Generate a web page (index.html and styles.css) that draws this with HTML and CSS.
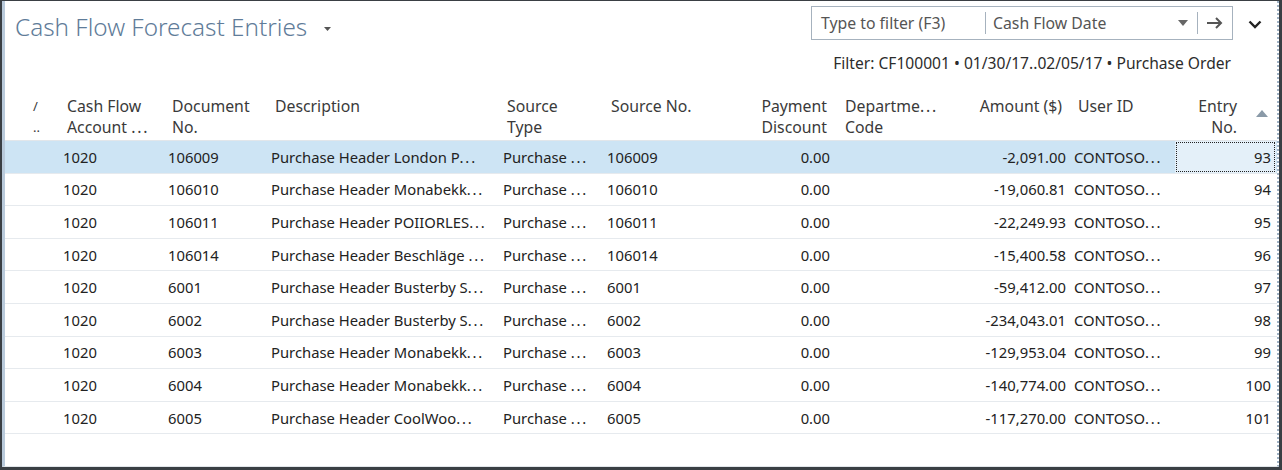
FILE: index.html
```html
<!DOCTYPE html>
<html>
<head>
<meta charset="utf-8">
<link rel="stylesheet" href="styles.css">
</head>
<body>
<div class="frame">
  <div class="inner">
    <div class="top">
      <div class="title">Cash Flow Forecast Entries <span class="caret"><svg width="7" height="4" viewBox="0 0 7 4"><path d="M0 0h7L3.5 4z" fill="#555"/></svg></span></div>
      <div class="tools">
        <div class="filterbar">
          <span class="fb-input">Type to filter (F3)</span>
          <span class="fb-sep"></span>
          <span class="fb-field">Cash Flow Date</span>
          <span class="fb-drop"><svg width="10" height="6" viewBox="0 0 10 6"><path d="M0 0h10L5 6z" fill="#666"/></svg></span>
          <span class="fb-sep2"></span>
          <span class="fb-go"><svg width="18" height="14" viewBox="0 0 18 14"><path d="M1 7h14M10 2l5 5-5 5" fill="none" stroke="#555" stroke-width="2"/></svg></span>
        </div>
        <div class="chev"><svg width="14" height="9" viewBox="0 0 14 9"><path d="M1.5 1.5l5.5 5.5 5.5-5.5" fill="none" stroke="#222" stroke-width="2.4"/></svg></div>
      </div>
    </div>
    <div class="filterline">Filter: CF100001 • 01/30/17..02/05/17 • Purchase Order</div>

    <div class="grid">
      <div class="row head">
        <div class="c c0">/<br>..</div>
        <div class="c">Cash Flow<br>Account <span class="el">...</span></div>
        <div class="c">Document<br>No.</div>
        <div class="c">Description</div>
        <div class="c">Source<br>Type</div>
        <div class="c">Source No.</div>
        <div class="c r">Payment<br>Discount</div>
        <div class="c dept">Departme<span class="el">...</span><br>Code</div>
        <div class="c r amt">Amount ($)</div>
        <div class="c uid">User ID</div>
        <div class="c r entry">Entry<br>No.<span class="sort"><svg width="12" height="7" viewBox="0 0 12 7"><path d="M0 7L6 0l6 7z" fill="#8a9aa8"/></svg></span></div>
      </div>

      <div class="row sel">
        <div class="c"></div><div class="c">1020</div><div class="c">106009</div><div class="c">Purchase Header London P<span class="el">...</span></div><div class="c">Purchase <span class="el">...</span></div><div class="c">106009</div><div class="c r">0.00</div><div class="c"></div><div class="c r amt">-2,091.00</div><div class="c uid">CONTOSO<span class="el">...</span></div><div class="c r entry focus">93</div>
      </div>
      <div class="row">
        <div class="c"></div><div class="c">1020</div><div class="c">106010</div><div class="c">Purchase Header Monabekk<span class="el">...</span></div><div class="c">Purchase <span class="el">...</span></div><div class="c">106010</div><div class="c r">0.00</div><div class="c"></div><div class="c r amt">-19,060.81</div><div class="c uid">CONTOSO<span class="el">...</span></div><div class="c r entry">94</div>
      </div>
      <div class="row">
        <div class="c"></div><div class="c">1020</div><div class="c">106011</div><div class="c">Purchase Header POIIORLES<span class="el">...</span></div><div class="c">Purchase <span class="el">...</span></div><div class="c">106011</div><div class="c r">0.00</div><div class="c"></div><div class="c r amt">-22,249.93</div><div class="c uid">CONTOSO<span class="el">...</span></div><div class="c r entry">95</div>
      </div>
      <div class="row">
        <div class="c"></div><div class="c">1020</div><div class="c">106014</div><div class="c">Purchase Header Beschläge <span class="el">...</span></div><div class="c">Purchase <span class="el">...</span></div><div class="c">106014</div><div class="c r">0.00</div><div class="c"></div><div class="c r amt">-15,400.58</div><div class="c uid">CONTOSO<span class="el">...</span></div><div class="c r entry">96</div>
      </div>
      <div class="row">
        <div class="c"></div><div class="c">1020</div><div class="c">6001</div><div class="c">Purchase Header Busterby S<span class="el">...</span></div><div class="c">Purchase <span class="el">...</span></div><div class="c">6001</div><div class="c r">0.00</div><div class="c"></div><div class="c r amt">-59,412.00</div><div class="c uid">CONTOSO<span class="el">...</span></div><div class="c r entry">97</div>
      </div>
      <div class="row">
        <div class="c"></div><div class="c">1020</div><div class="c">6002</div><div class="c">Purchase Header Busterby S<span class="el">...</span></div><div class="c">Purchase <span class="el">...</span></div><div class="c">6002</div><div class="c r">0.00</div><div class="c"></div><div class="c r amt">-234,043.01</div><div class="c uid">CONTOSO<span class="el">...</span></div><div class="c r entry">98</div>
      </div>
      <div class="row">
        <div class="c"></div><div class="c">1020</div><div class="c">6003</div><div class="c">Purchase Header Monabekk<span class="el">...</span></div><div class="c">Purchase <span class="el">...</span></div><div class="c">6003</div><div class="c r">0.00</div><div class="c"></div><div class="c r amt">-129,953.04</div><div class="c uid">CONTOSO<span class="el">...</span></div><div class="c r entry">99</div>
      </div>
      <div class="row">
        <div class="c"></div><div class="c">1020</div><div class="c">6004</div><div class="c">Purchase Header Monabekk<span class="el">...</span></div><div class="c">Purchase <span class="el">...</span></div><div class="c">6004</div><div class="c r">0.00</div><div class="c"></div><div class="c r amt">-140,774.00</div><div class="c uid">CONTOSO<span class="el">...</span></div><div class="c r entry">100</div>
      </div>
      <div class="row">
        <div class="c"></div><div class="c">1020</div><div class="c">6005</div><div class="c">Purchase Header CoolWoo<span class="el">...</span></div><div class="c">Purchase <span class="el">...</span></div><div class="c">6005</div><div class="c r">0.00</div><div class="c"></div><div class="c r amt">-117,270.00</div><div class="c uid">CONTOSO<span class="el">...</span></div><div class="c r entry">101</div>
      </div>
    </div>
  </div>
</div>
</body>
</html>
```

FILE: styles.css
```css
html, body {
  margin: 0;
  padding: 0;
  background: #2f3438;
}
body {
  width: 1282px;
  height: 470px;
  font-family: "Noto Sans", "Open Sans", sans-serif;
  color: #222;
}
.frame {
  box-sizing: border-box;
  width: 1282px;
  height: 470px;
  border-top: 1px solid #3a3f44;
  border-left: 2px solid #3a3f44;
  border-right: 3px solid #3a3f44;
  border-bottom: 3px solid #3a3f44;
  background: #fff;
}
.inner {
  box-sizing: border-box;
  height: 100%;
  border-left: 3px solid #b9cadb;
  border-right: 2px dotted #9fb2c4;
  border-bottom: 1px solid #e2e6ea;
  background: #fff;
}
.top {
  display: flex;
  justify-content: space-between;
  align-items: flex-start;
  height: 46px;
}
.title {
  margin-left: 10px;
  margin-top: 10px;
  font-size: 24.3px;
  font-weight: 300;
  line-height: 32px;
  color: #5f7c99;
}
.caret {
  display: inline-block;
  margin-left: 10px;
  vertical-align: 5px;
}
.caret svg { display: block; }
.tools {
  display: flex;
  align-items: center;
  margin-top: 5px;
}
.filterbar {
  box-sizing: border-box;
  width: 422px;
  height: 34px;
  border: 1px solid #a6b2be;
  display: flex;
  align-items: center;
  font-size: 15.8px;
  color: #555;
}
.fb-input {
  width: 173px;
  padding-left: 9px;
  box-sizing: border-box;
}
.fb-sep {
  width: 1px;
  height: 22px;
  background: #a6b2be;
}
.fb-field {
  flex: 1;
  padding-left: 7px;
}
.fb-drop {
  display: flex;
  margin-right: 9px;
}
.fb-sep2 {
  width: 1px;
  height: 22px;
  background: #a6b2be;
}
.fb-go {
  display: flex;
  width: 34px;
  justify-content: center;
}
.chev {
  width: 44px;
  display: flex;
  justify-content: center;
  padding-top: 2px;
}
.filterline {
  text-align: right;
  padding-right: 46px;
  font-size: 15.6px;
  line-height: 20px;
  color: #2c2c2c;
  margin-top: 6px;
}
.grid {
  margin-top: 23px;
}
.row {
  display: grid;
  grid-template-columns: 52px 105px 103px 232px 104px 134px 103px 130px 102px 105px 101px;
  height: 31.6px;
  border-bottom: 1px solid #e6eaee;
  font-size: 14.8px;
  align-items: center;
}
.row.head {
  height: 44px;
  align-items: start;
  font-size: 15.8px;
  line-height: 21px;
  color: #3a3a3a;
  border-bottom: 1px solid #e2e6ea;
}
.el { letter-spacing: 1.8px; }
.c {
  padding: 0 6px;
  white-space: nowrap;
  overflow: hidden;
  position: relative;
}
.head .c { padding-left: 10px; }
.head .c0 { padding-left: 28px; font-size: 13px; }
.head .c.dept { padding-left: 7px; }
.c.r { text-align: right; padding-right: 8px; }
.head .c.r { padding-right: 11px; }
.c.amt { padding-right: 4px; }
.head .c.amt { padding-right: 8px; }
.c.uid { padding-left: 4px; }
.head .c.uid { padding-left: 8px; }
.c.entry { padding-right: 5px; }
.head .c.entry { padding-right: 39px; }
.sort {
  position: absolute;
  right: 8px;
  top: 14px;
}
.sort svg { display: block; }
.row.sel { background: #cde4f4; }
.row.sel .focus {
  background: #e4f0f9;
  outline: 1px dotted #222;
  outline-offset: -2px;
  height: 100%;
  display: flex;
  align-items: center;
  justify-content: flex-end;
  box-sizing: border-box;
}
```
